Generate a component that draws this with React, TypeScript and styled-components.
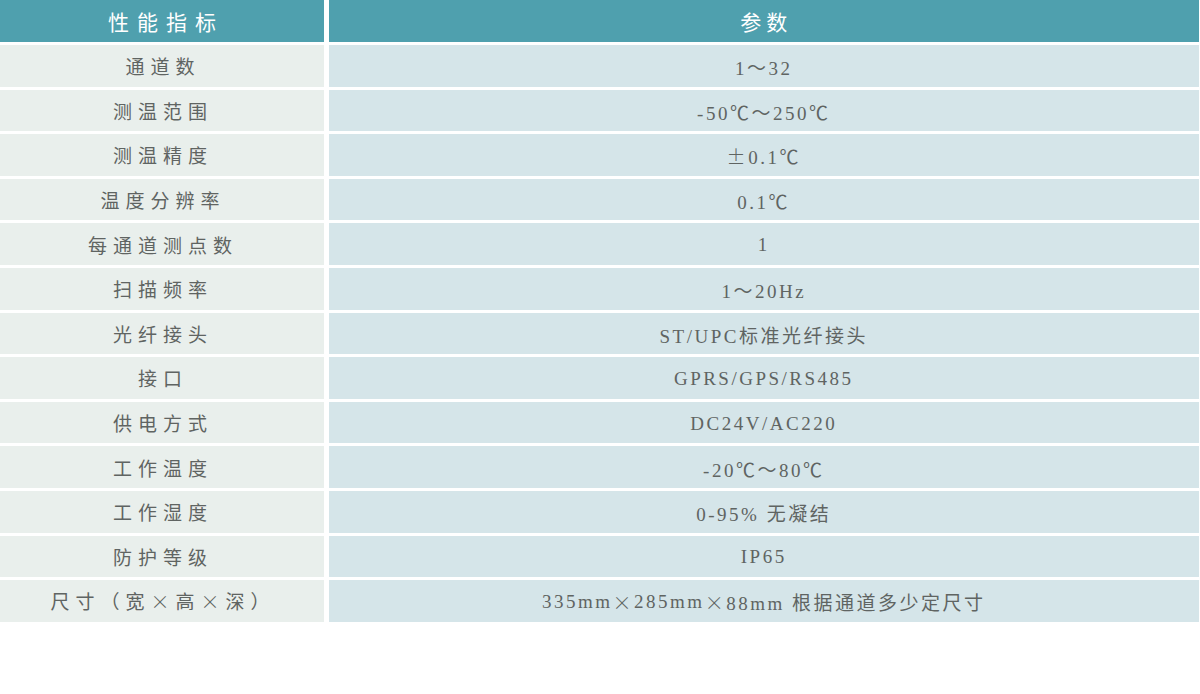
import React from 'react';
import styled, { createGlobalStyle } from 'styled-components';

const GlobalStyle = createGlobalStyle`
    html, body {
        margin: 0;
        padding: 0;
        background: #ffffff;
    }
    body {
        font-family: "Liberation Serif", "Noto Sans CJK SC", serif;
    }
`;

const SpecTable = styled.div`
    width: 1199px;
    display: grid;
    grid-template-columns: 324px 1fr;
    grid-template-rows: 42px;
    grid-auto-rows: 41.6px;
    column-gap: 4.5px;
    row-gap: 3px;
`;

const Cell = styled.div`
    display: flex;
    align-items: center;
    justify-content: center;
    font-family: "Liberation Serif", "Noto Sans CJK SC", serif;
    white-space: pre;
`;

const HeadCell = styled(Cell)<{ $spacing: number }>`
    background: #4fa0ae;
    color: #ffffff;
    font-size: 21px;
    letter-spacing: ${p => p.$spacing}px;
    padding-left: ${p => p.$spacing}px;
`;

const NameCell = styled(Cell)`
    background: #e9efec;
    color: #5f6462;
    font-size: 19px;
    letter-spacing: 6px;
    padding-left: 2px;
`;

const ValueCell = styled(Cell)`
    background: #d5e5e9;
    color: #5f6462;
    font-size: 19px;
    letter-spacing: 2.5px;
    padding-top: 2px;
`;

// full-width symbols, as a Song font draws × and ±
const Wide = styled.span`
    font-family: "Noto Sans CJK SC", sans-serif;
    font-weight: 300;
`;

const withWideSymbols = (text: string) =>
    text.split(/([×±])/).map((part, i) =>
        part === "×" || part === "±" ? <Wide key={i}>{part}</Wide> : part
    );

type Spec = { name: string; value: string };

const specs: Spec[] = [
    { name: "通道数", value: "1～32" },
    { name: "测温范围", value: "-50℃～250℃" },
    { name: "测温精度", value: "±0.1℃" },
    { name: "温度分辨率", value: "0.1℃" },
    { name: "每通道测点数", value: "1" },
    { name: "扫描频率", value: "1～20Hz" },
    { name: "光纤接头", value: "ST/UPC标准光纤接头" },
    { name: "接口", value: "GPRS/GPS/RS485" },
    { name: "供电方式", value: "DC24V/AC220" },
    { name: "工作温度", value: "-20℃～80℃" },
    { name: "工作湿度", value: "0-95% 无凝结" },
    { name: "防护等级", value: "IP65" },
    { name: "尺寸（宽×高×深）", value: "335mm×285mm×88mm 根据通道多少定尺寸" },
];

const App = () => {
    return (
        <>
            <GlobalStyle />
            <SpecTable>
                <HeadCell $spacing={8}>性能指标</HeadCell>
                <HeadCell $spacing={5}>参数</HeadCell>
                {specs.map(s => (
                    <React.Fragment key={s.name}>
                        <NameCell>{withWideSymbols(s.name)}</NameCell>
                        <ValueCell>{withWideSymbols(s.value)}</ValueCell>
                    </React.Fragment>
                ))}
            </SpecTable>
        </>
    );
};

export default App;
